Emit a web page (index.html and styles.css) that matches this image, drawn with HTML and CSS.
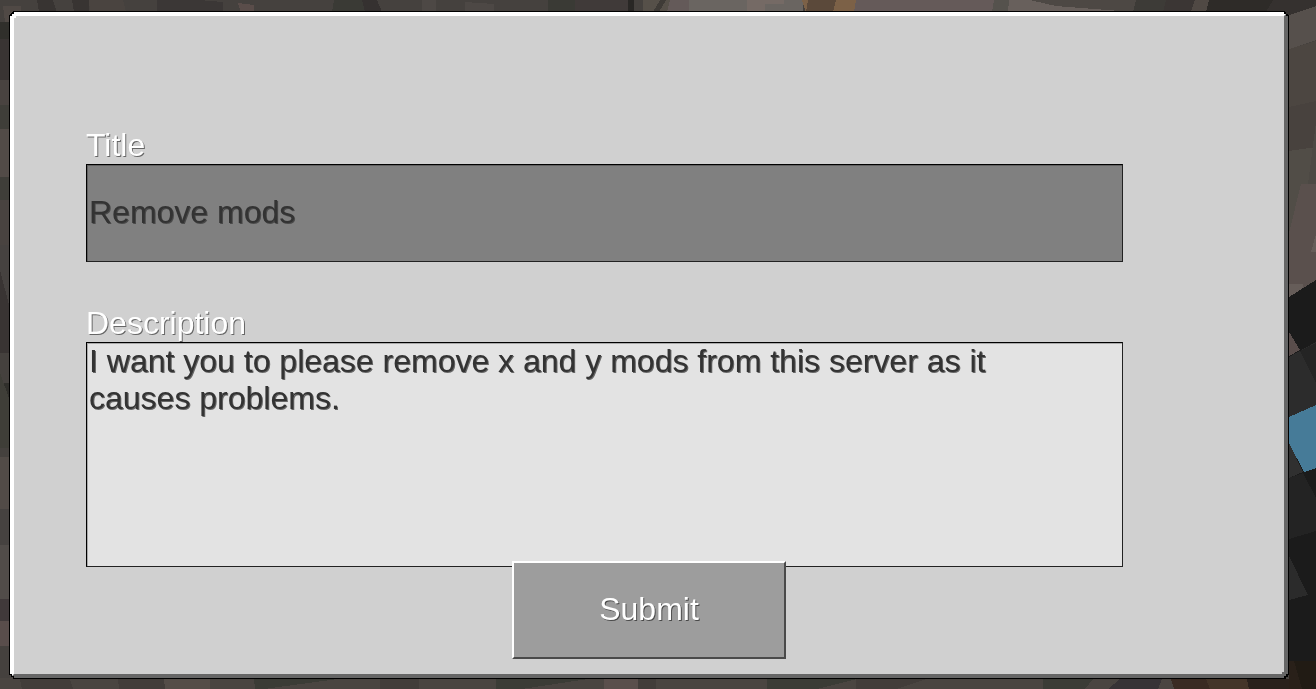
FILE: index.html
```html
<!DOCTYPE html>
<html lang="en">
<head>
<meta charset="utf-8">
<meta name="viewport" content="width=device-width, initial-scale=1">
<title>Submit request</title>
<link rel="stylesheet" href="styles.css">
</head>
<body>
<svg class="scene" viewBox="0 0 1316 689" preserveAspectRatio="none" aria-hidden="true" shape-rendering="crispEdges">
  <rect width="1316" height="689" fill="#45413e"/>
  <!-- upper stones -->
  <path fill="#383432" d="M37 0h16l4 12H39zM72 0h17v12H74zM157 0h42l-1 12h-41z"/>
  <path fill="#4a4440" d="M89 0h34l3 12H90z"/>
  <path fill="#3b3736" d="M199 0l24 2v10h-66V0z"/>
  <path fill="#5a4d4a" d="M238 3l16 2v7h-13z"/>
  <path fill="#3a3a35" d="M334 0h28l3 12h-33zM548 0h27v12h-27z"/>
  <path fill="#353130" d="M362 0h15l5 12h-17z"/>
  <path fill="#4d4845" d="M422 0h14v12h-14zM465 2l29 2v8h-29z"/>
  <path fill="#403a39" d="M575 0h53v12h-53z"/>
  <path fill="#292725" d="M628 0h6v12h-6z"/>
  <path fill="#565049" d="M643 0h27l-3 12h-24z"/>
  <path fill="#3f3b37" d="M660 0h6l-7 12h-6z"/>
  <path fill="#645a59" d="M670 0h19v12h-22z"/>
  <path fill="#6a6561" d="M689 0h114v12H689z"/>
  <path fill="#756a65" d="M747 0h37v4h-19v8h-18z"/>
  <path fill="#7c6147" d="M802 0h54l-2 12h-48z"/>
  <path fill="#5b493a" d="M808 0h28l-3 12h-27z"/>
  <path fill="#655a59" d="M856 0h138l-2 12H854z"/>
  <path fill="#55524d" d="M994 0h15v12h-17z"/>
  <path fill="#68605c" d="M1009 0h57l65 12H1008z"/>
  <path fill="#4d4844" d="M1030 0h106l-3 12-77-6z"/>
  <path fill="#3d3b37" d="M1136 0h30l-3 12h-30z"/>
  <path fill="#3b3634" d="M1166 0h30l-5 12h-28z"/>
  <path fill="#504944" d="M1195 0h14l-3 12h-15z"/>
  <path fill="#2e2b28" d="M1209 0h64l-7 12h-60z"/>
  <path fill="#35312f" d="M1273 0h43v7l-27 8-23-3z"/>
  <!-- left stones -->
  <path fill="#504945" d="M3 6h18v9H9v7H5z"/>
  <path fill="#302f2b" d="M0 22h9v17H0zM0 383h9v52H0z"/>
  <path fill="#393433" d="M0 39h9v41H0zM0 246h9v107H0z"/>
  <path fill="#494340" d="M0 80h9v25H0zM0 200h9v45H0z"/>
  <path fill="#3f3e39" d="M0 105h9v24H0zM0 177h9v23H0z"/>
  <path fill="#524b47" d="M0 129h9v48H0zM0 457h9v52H0z"/>
  <path fill="#3f3e38" d="M0 373l9 25v50H0z"/>
  <path fill="#464240" d="M0 270l9 35v-60H0zM0 509h9v36H0z"/>
  <path fill="#514c49" d="M0 545h9v54H0z"/>
  <path fill="#40393a" d="M0 599h9v22H0z"/>
  <path fill="#594d4b" d="M0 621h9v25H0z"/>
  <!-- lower stones -->
  <path fill="#4a4541" d="M0 678h1316v11H0z"/>
  <path fill="#423d3a" d="M20 679h50l3 10H22zM118 679h46l1 10h-46zM380 679h39v10h-39zM612 679h44v10h-44zM856 679h70l-30 10h-40z"/>
  <path fill="#544d48" d="M164 679h46v10h-45z"/>
  <path fill="#3b3c36" d="M254 679h84l-74 10h-9zM496 679h92l-66 10h-26zM767 679h90l-40 10h-50zM1043 679h50l-8 10h-42z"/>
  <path fill="#5a4f4c" d="M604 679h34v10h-34z"/>
  <path fill="#373336" d="M1120 679h42l-4 10h-50z"/>
  <path fill="#3a2b23" d="M1171 679h36l5 10h-38z"/>
  <path fill="#443529" d="M1206 679h41l3 10h-40z"/>
  <path fill="#29211c" d="M1247 679h42v10h-40z"/>
  <!-- right side -->
  <path fill="#56504c" d="M1289 15l27-9v34l-27 9z"/>
  <path fill="#4c4641" d="M1289 49l27-8v64l-27 2z"/>
  <path fill="#48423e" d="M1289 107l27-6v48l-27 2z"/>
  <path fill="#514d47" d="M1289 151l27-4v42l-27 45z"/>
  <path fill="#5a504d" d="M1301 184h15v97l-27 16v-64z"/>
  <path fill="#4d4944" d="M1316 122v62h-8z"/>
  <path fill="#665d59" d="M1316 234v18h-5zM1289 284h14v5l-14 9z"/>
  <path fill="#1b1b1b" d="M1289 297l27-17v409h-27z"/>
  <path fill="#2c2c2c" d="M1289 357l27-15v63l-27 12z"/>
  <path fill="#242424" d="M1300 351l16-8v40z"/>
  <path fill="#594d4b" d="M1289 332l11 18-11 6z"/>
  <path fill="#467b98" d="M1289 417l27-12v63l-12 4-15-29z"/>
  <path fill="#303030" d="M1289 443l14 29-14 6z"/>
  <path fill="#232323" d="M1289 478l14-5 13 25v33l-27 8z"/>
  <path fill="#2b2b2b" d="M1289 556l19 39-19 5z"/>
  <path fill="#211b14" d="M1293 661h23v28h-23z"/>
  <path fill="#292019" d="M1289 661h5l8 28h-13z"/>
</svg>
<main class="screen">
  <div class="panel">
    <form class="form">
      <label class="label" for="title">Title</label>
      <input class="field field-title" id="title" type="text" value="Remove mods">
      <label class="label label-next" for="description">Description</label>
      <textarea class="field field-description" id="description">I want you to please remove x and y mods from this server as it causes problems.</textarea>
      <button class="submit" type="button">Submit</button>
    </form>
  </div>
</main>
</body>
</html>
```
FILE: styles.css
```css
* {
  box-sizing: border-box;
}

body {
  margin: 0;
  background: #45413e;
  font-family: "Liberation Sans", Arial, sans-serif;
  font-size: 32px;
  line-height: 36px;
}

.scene {
  position: fixed;
  inset: 0;
  width: 100%;
  height: 100%;
}

.screen {
  position: relative;
  display: flex;
  min-height: 100vh;
  padding: 11px 27px 10px 9px;
  will-change: transform;
}

/* Black outline with stepped pixel corners */
.panel {
  display: flex;
  flex: 1;
  padding: 1px;
  background: #000;
  clip-path: polygon(
    0 4px, 1px 4px, 1px 3px, 2px 3px, 2px 2px, 3px 2px, 3px 1px, 4px 1px, 4px 0,
    calc(100% - 4px) 0, calc(100% - 4px) 1px, calc(100% - 3px) 1px, calc(100% - 3px) 3px, calc(100% - 1px) 3px, calc(100% - 1px) 4px, 100% 4px,
    100% calc(100% - 4px), calc(100% - 1px) calc(100% - 4px), calc(100% - 1px) calc(100% - 2px), calc(100% - 3px) calc(100% - 2px), calc(100% - 3px) 100%,
    4px 100%, 4px calc(100% - 2px), 2px calc(100% - 2px), 2px calc(100% - 4px), 0 calc(100% - 4px)
  );
}

.form {
  display: flex;
  flex: 1;
  flex-direction: column;
  padding: 112px 161px 15px 72px;
  border: 4px solid;
  border-color: #fff #666 #666 #fff;
  background:
    linear-gradient(#fff, #fff) 0 0 / 2px 2px no-repeat,
    linear-gradient(#666, #666) 100% 100% / 2px 2px no-repeat,
    #d0d0d0;
  background-origin: padding-box;
  clip-path: polygon(
    0 4px, 2px 4px, 2px 2px, 4px 2px, 4px 0,
    calc(100% - 4px) 0, calc(100% - 4px) 2px, calc(100% - 2px) 2px, calc(100% - 2px) 4px, 100% 4px,
    100% calc(100% - 4px), calc(100% - 2px) calc(100% - 4px), calc(100% - 2px) calc(100% - 2px), calc(100% - 4px) calc(100% - 2px), calc(100% - 4px) 100%,
    4px 100%, 4px calc(100% - 2px), 2px calc(100% - 2px), 2px calc(100% - 4px), 0 calc(100% - 4px)
  );
}

.label {
  padding-bottom: 2px;
  color: #fff;
  line-height: 34px;
  text-shadow: 1px 1px #666;
}

.label-next {
  margin-top: 44px;
}

.field {
  width: 100%;
  margin: 0;
  padding: 0 2px;
  border: 1px solid;
  border-color: #000 #222 #222 #000;
  border-radius: 0;
  outline: 0;
  color: #333;
  font: inherit;
  text-shadow: 1px 1px #666;
}

.field-title {
  height: 98px;
  padding-bottom: 2px;
  background: #808080;
  box-shadow: inset 1px 1px #606060;
  text-shadow: 1px 1px #4a4a4a;
}

.field-description {
  flex: 1;
  min-height: 120px;
  padding-right: 40px;
  background: #e3e3e3;
  box-shadow: inset 1px 1px #aaa;
  line-height: 37px;
  overflow: auto;
  resize: none;
}

/* The margins centre the button in the panel, over the lower edge of the text area */
.submit {
  position: relative;
  align-self: center;
  width: 274px;
  height: 98px;
  margin: -6px 0 0 89px;
  padding: 0 0 2px;
  border: 2px solid;
  border-color: #fff #4a4a4a #4a4a4a #fff;
  border-radius: 0;
  background: #9d9d9d;
  color: #fff;
  font: inherit;
  text-shadow: 1px 1px #4a4a4a;
}
```
